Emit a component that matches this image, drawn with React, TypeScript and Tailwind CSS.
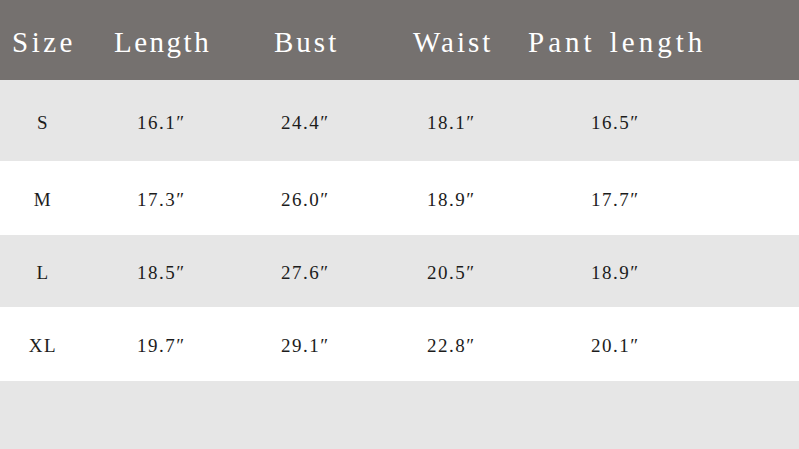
import React from 'react';

const rows = [
  { size: 'S', length: '16.1″', bust: '24.4″', waist: '18.1″', pant: '16.5″', h: 'h-[81px]', bg: 'bg-[#e6e6e6]' },
  { size: 'M', length: '17.3″', bust: '26.0″', waist: '18.9″', pant: '17.7″', h: 'h-[74px]', bg: 'bg-white' },
  { size: 'L', length: '18.5″', bust: '27.6″', waist: '20.5″', pant: '18.9″', h: 'h-[72px]', bg: 'bg-[#e6e6e6]' },
  { size: 'XL', length: '19.7″', bust: '29.1″', waist: '22.8″', pant: '20.1″', h: 'h-[74px]', bg: 'bg-white' },
];

const serif = { fontFamily: '"Liberation Serif", "DejaVu Serif", serif' };

export default function App() {
  return (
    <div className="w-[799px] h-[449px] flex flex-col bg-[#e6e6e6] overflow-hidden" style={serif}>
      {/* header */}
      <div className="h-[80px] bg-[#75716f] flex items-center pl-[12px] pt-[5px] text-white text-[29px] tracking-[3px] whitespace-nowrap">
        <div className="w-[102px] tracking-[3.5px]">Size</div>
        <div className="w-[160px] tracking-[2.5px]">Length</div>
        <div className="w-[139px]">Bust</div>
        <div className="w-[115px]">Waist</div>
        <div className="tracking-[4px] [word-spacing:3px]">Pant length</div>
      </div>

      {rows.map((r) => (
        <div key={r.size} className={`${r.h} ${r.bg} flex items-center pl-[13px] pt-[5px] text-[#1c1c1c] text-[19px] tracking-[1.5px] whitespace-nowrap`}>
          <div className="w-[60px] text-center">{r.size}</div>
          <div className="w-[64px]" />
          <div className="w-[144px]">{r.length}</div>
          <div className="w-[146px]">{r.bust}</div>
          <div className="w-[164px]">{r.waist}</div>
          <div>{r.pant}</div>
        </div>
      ))}

      <div className="flex-1 bg-[#e6e6e6]" />
    </div>
  );
}
